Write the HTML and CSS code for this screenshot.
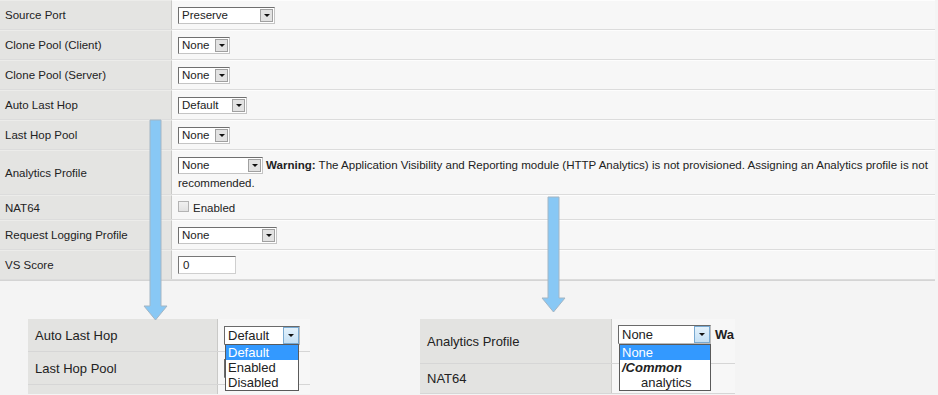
FILE: index.html
```html
<!DOCTYPE html>
<html>
<head>
<meta charset="utf-8">
<link rel="stylesheet" href="styles.css">
</head>
<body>
<div class="props">
  <div class="row h30"><div class="lab">Source Port</div><div class="val"><span class="sel w97"><span class="sel-v">Preserve</span><span class="sel-b"></span></span></div></div>
  <div class="row h30"><div class="lab">Clone Pool (Client)</div><div class="val"><span class="sel w52"><span class="sel-v">None</span><span class="sel-b"></span></span></div></div>
  <div class="row h30"><div class="lab">Clone Pool (Server)</div><div class="val"><span class="sel w52"><span class="sel-v">None</span><span class="sel-b"></span></span></div></div>
  <div class="row h30"><div class="lab">Auto Last Hop</div><div class="val"><span class="sel w69"><span class="sel-v">Default</span><span class="sel-b"></span></span></div></div>
  <div class="row h30"><div class="lab">Last Hop Pool</div><div class="val"><span class="sel w52"><span class="sel-v">None</span><span class="sel-b"></span></span></div></div>
  <div class="row h45"><div class="lab">Analytics Profile</div><div class="val val-block"><div class="line1"><span class="sel w85"><span class="sel-v">None</span><span class="sel-b"></span></span><span class="warn"><b>Warning:</b> The Application Visibility and Reporting module (HTTP Analytics) is not provisioned. Assigning an Analytics profile is not</span></div><div class="line2">recommended.</div></div></div>
  <div class="row h25"><div class="lab">NAT64</div><div class="val"><span class="chk"></span><span class="chk-l">Enabled</span></div></div>
  <div class="row h30"><div class="lab">Request Logging Profile</div><div class="val"><span class="sel w99"><span class="sel-v">None</span><span class="sel-b"></span></span></div></div>
  <div class="row h31"><div class="lab">VS Score</div><div class="val"><span class="inp">0</span></div></div>
</div>

<div class="lower">
  <div class="inset inset-left">
    <div class="irow ih33">
      <div class="ilab">Auto Last Hop</div>
      <div class="ival">
        <span class="isel iw76"><span class="sel-v">Default</span><span class="isel-b"></span></span>
        <ul class="drop dw74">
          <li class="hl">Default</li>
          <li>Enabled</li>
          <li>Disabled</li>
        </ul>
      </div>
    </div>
    <div class="irow ih33">
      <div class="ilab">Last Hop Pool</div>
      <div class="ival"><span class="isel iw60"></span></div>
    </div>
    <div class="irow ih9"><div class="ilab"></div><div class="ival"></div></div>
  </div>

  <div class="inset inset-right">
    <div class="irow ih45">
      <div class="ilab">Analytics Profile</div>
      <div class="ival ival-top">
        <div class="iline"><span class="isel iw93"><span class="sel-v">None</span><span class="isel-b"></span></span><b class="iwarn">Wa</b></div>
        <ul class="drop dw92">
          <li class="hl">None</li>
          <li class="grp">/Common</li>
          <li class="ind">analytics</li>
        </ul>
      </div>
    </div>
    <div class="irow ih30">
      <div class="ilab">NAT64</div>
      <div class="ival"></div>
    </div>
  </div>
</div>

<svg class="arrows" width="938" height="395" viewBox="0 0 938 395" xmlns="http://www.w3.org/2000/svg">
  <path d="M150 120 H161 V306 H167 L155.5 320 L144 306 H150 Z" fill="#88c8f5" stroke="#a4b6c4" stroke-width="1"/>
  <path d="M548 197 H559 V298 H565 L553.5 312 L542 298 H548 Z" fill="#88c8f5" stroke="#a4b6c4" stroke-width="1"/>
</svg>
</body>
</html>
```
FILE: styles.css
```css
* { box-sizing: border-box; margin: 0; padding: 0; }
body {
  width: 938px;
  height: 395px;
  overflow: hidden;
  position: relative;
  background: #f4f4f4;
  font-family: "Liberation Sans", Arial, sans-serif;
  font-size: 11.5px;
  color: #222;
}
.props {
  width: 935px;
  background: #f7f7f7;
  border-bottom: 1px solid #d4d4d4;
}
.row {
  display: grid;
  grid-template-columns: 172px 1fr;
  border-bottom: 1px solid #dcdcdc;
}
.h30 { height: 30px; }
.h45 { height: 45px; }
.h25 { height: 25px; }
.h31 { height: 30px; }
.lab {
  background: #e4e4e2;
  border-right: 1px solid #c9c9c7;
  border-top: 1px solid #ececea;
  display: flex;
  align-items: center;
  padding-left: 5px;
}
.val {
  display: flex;
  align-items: center;
  padding-left: 6px;
  border-top: 1px solid #fdfdfd;
  overflow: hidden;
}
.val-block {
  display: block;
  padding-top: 5px;
}
.line1 {
  display: flex;
  align-items: center;
  white-space: nowrap;
  height: 18px;
}
.line2 { line-height: 16px; margin-top: 1px; }
.warn { margin-left: 3px; font-size: 11.55px; }
.sel {
  display: inline-flex;
  flex-shrink: 0;
  align-items: center;
  justify-content: space-between;
  height: 17px;
  background: #fff;
  border: 1px solid #6f6f6f;
  border-right-color: #c4c4c4;
  border-bottom-color: #c4c4c4;
  padding-left: 3px;
}
.w97 { width: 97px; }
.w52 { width: 52px; }
.w69 { width: 69px; }
.w85 { width: 85px; }
.w99 { width: 99px; }
.sel-b {
  width: 13px;
  height: 13px;
  margin-right: 1px;
  background: #e2e2e2;
  border: 1px solid #a0a0a0;
  display: flex;
  align-items: center;
  justify-content: center;
}
.sel-b::after, .isel-b::after {
  content: "";
  border-left: 3px solid transparent;
  border-right: 3px solid transparent;
  border-top: 3px solid #111;
}
.chk {
  width: 11px;
  height: 11px;
  border: 1px solid #b3b3b3;
  background: linear-gradient(#f0f0f0, #e2e2e2);
  margin-top: -2px;
}
.chk-l { margin-left: 4px; }
.inp {
  width: 58px;
  height: 18px;
  background: #fff;
  border: 1px solid #777;
  border-right-color: #cfcfcf;
  border-bottom-color: #cfcfcf;
  padding-left: 4px;
  line-height: 16px;
}

.lower {
  display: flex;
  gap: 110px;
  padding: 38px 0 0 28px;
  font-size: 13px;
}
.inset-left { width: 282px; }
.inset-right { width: 315px; }
.irow {
  display: grid;
  border-bottom: 1px solid #d6d6d6;
}
.inset-left .irow { grid-template-columns: 190px 92px; }
.inset-right .irow { grid-template-columns: 192px 123px; }
.ih33 { height: 33px; }
.ih45 { height: 45px; }
.ih30 { height: 30px; }
.ih9 { height: 9px; border-bottom: none; }
.ilab {
  background: #e3e3e1;
  border-right: 1px solid #c9c9c7;
  display: flex;
  align-items: center;
  padding-left: 7px;
}
.ival {
  position: relative;
  background: #f7f7f7;
  display: flex;
  align-items: center;
  padding-left: 6px;
}
.ival-top {
  display: block;
  padding-top: 6px;
}
.iline {
  display: flex;
  align-items: center;
  white-space: nowrap;
}
.iwarn { margin-left: 4px; }
.isel {
  display: inline-flex;
  flex-shrink: 0;
  align-items: center;
  justify-content: space-between;
  height: 19px;
  background: #fff;
  border: 1px solid #6a6a6a;
  border-right-color: #bcbcbc;
  border-bottom-color: #bcbcbc;
  padding-left: 3px;
}
.iw76 { width: 76px; }
.iw60 { width: 60px; }
.iw93 { width: 93px; }
.isel-b {
  width: 16px;
  height: 17px;
  background: linear-gradient(#e3f1fb, #c4e0f5);
  border: 1px solid #78a9d1;
  display: flex;
  align-items: center;
  justify-content: center;
}
.drop {
  position: absolute;
  top: 25px;
  left: 7px;
  list-style: none;
  background: #fff;
  border: 1px solid #5a5a5a;
  z-index: 2;
}
.dw74 { width: 74px; }
.dw92 { width: 92px; left: 7px; }
.drop li {
  height: 15px;
  line-height: 15px;
  padding-left: 2px;
  white-space: nowrap;
}
.drop li.hl { background: #3399ff; color: #fff; }
.drop li.grp { font-weight: bold; font-style: italic; }
.drop li.ind { padding-left: 21px; }

.arrows {
  position: absolute;
  left: 0;
  top: 0;
  pointer-events: none;
  z-index: 5;
}
```
